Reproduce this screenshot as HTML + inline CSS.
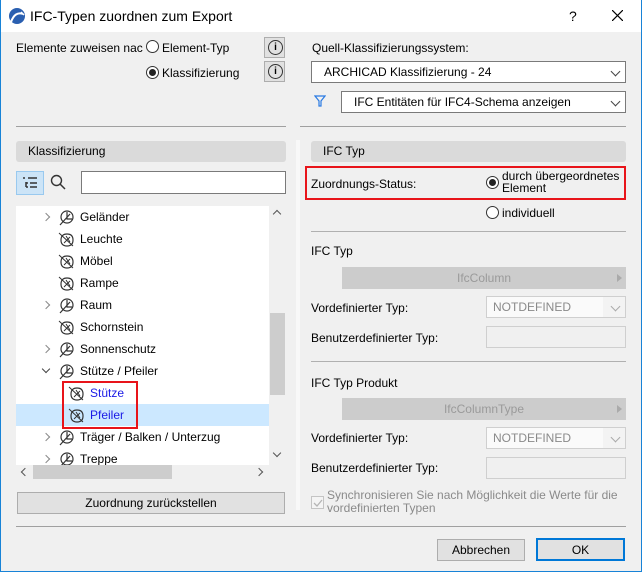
<!DOCTYPE html>
<html><head><meta charset="utf-8"><style>
*{box-sizing:border-box;margin:0;padding:0}
body{width:642px;height:572px;overflow:hidden;background:#f0f0f0;font-family:"Liberation Sans",sans-serif;font-size:12px;color:#000;position:relative}
.a{position:absolute;white-space:nowrap}
.t{line-height:14px}
.sep{position:absolute;height:1px;background:#a0a0a0}
.hdr{position:absolute;background:#dadada;border-radius:3px;height:21px;line-height:21px;padding-left:12px}
.dd{position:absolute;background:#fff;border:1px solid #7a7a7a;height:22px;line-height:20px;padding-left:12px}
.chev{position:absolute;right:6px;top:6px;width:7px;height:7px;border-right:1px solid #444;border-bottom:1px solid #444;transform:rotate(45deg)}
.radio{position:absolute;width:13px;height:13px;border:1px solid #333;border-radius:50%;background:#fff}
.radio.on::after{content:"";position:absolute;left:2px;top:2px;width:7px;height:7px;border-radius:50%;background:#222}
.info{position:absolute;width:21px;height:21px;background:#e1e1e1;border:1px solid #adadad}
.info::after{content:"i";position:absolute;left:3px;top:2px;width:13px;height:13px;border:1.3px solid #333;border-radius:50%;text-align:center;font-size:10px;line-height:13px;font-weight:bold}
.row{position:absolute;left:16px;width:253px;height:22px;line-height:22px}
.row .arr{position:absolute;left:27px;top:8px;width:6px;height:6px;border-right:1.5px solid #888;border-top:1.5px solid #888;transform:rotate(45deg)}
.row .arr.d{transform:rotate(135deg);top:6px;border-color:#444}
.row svg{position:absolute;top:3px}
.lbl{position:absolute;line-height:22px}
.gbtn{position:absolute;background:#cccccc;height:22px;line-height:22px;text-align:center;color:#9a9a9a}
.ddis{position:absolute;background:#f0f0f0;border:1px solid #cfcfcf;height:22px;line-height:20px;padding-left:6px;color:#8a8a8a;background:linear-gradient(90deg,#fafafa 0,#fafafa 84%,#f3f3f3 84%)}
.inp{position:absolute;border:1px solid #cfcfcf;background:#f0f0f0;height:22px}
.btn{position:absolute;background:#e1e1e1;border:1px solid #adadad;height:22px;line-height:20px;text-align:center}
</style></head><body>
<div class="a" style="left:0;top:0;width:642px;height:572px;border:1px solid #1883d7;border-top:none"></div>
<div class="a" style="left:1px;top:0;width:640px;height:32px;background:#fff"></div>
<svg class="a" style="left:8px;top:7px" width="18" height="18" viewBox="0 0 18 18"><circle cx="9" cy="9" r="8" fill="#2a5fb0"/><path d="M3 15 Q7 4 15 7" stroke="#fff" stroke-width="2" fill="none"/><path d="M13 5 L16 8" stroke="#fff" stroke-width="1.5"/></svg>
<div class="a" style="left:30px;top:8px;font-size:14px;line-height:16px">IFC-Typen zuordnen zum Export</div>
<div class="a" style="left:569px;top:8px;font-size:14px">?</div>
<svg class="a" style="left:612px;top:10px" width="11" height="11"><path d="M0 0L11 11M11 0L0 11" stroke="#000" stroke-width="1.2"/></svg>

<div class="a t" style="left:16px;top:41px">Elemente zuweisen nac</div>
<div class="radio" style="left:146px;top:40px"></div>
<div class="a t" style="left:162px;top:41px">Element-Typ</div>
<div class="info" style="left:264px;top:37px"></div>
<div class="radio on" style="left:146px;top:66px"></div>
<div class="a t" style="left:162px;top:66px">Klassifizierung</div>
<div class="info" style="left:264px;top:61px"></div>

<div class="a t" style="left:312px;top:41px">Quell-Klassifizierungssystem:</div>
<div class="dd" style="left:311px;top:61px;width:315px">ARCHICAD Klassifizierung - 24<div class="chev"></div></div>
<svg class="a" style="left:314px;top:95px" width="12" height="12"><path d="M1 1H11L7 6V11H5V6Z" fill="none" stroke="#2a7ae2" stroke-width="1.2"/></svg>
<div class="dd" style="left:341px;top:91px;width:285px">IFC Entitäten für IFC4-Schema anzeigen<div class="chev"></div></div>

<div class="sep" style="left:16px;top:126px;width:270px"></div>
<div class="sep" style="left:300px;top:126px;width:326px"></div>
<div class="a" style="left:296px;top:140px;width:4px;height:370px;background:#f8f8f8"></div>

<div class="hdr" style="left:16px;top:141px;width:270px">Klassifizierung</div>
<div class="a" style="left:16px;top:171px;width:28px;height:24px;background:#cce4f7;border:1px solid #99c9ef"></div>
<svg class="a" style="left:22px;top:176px" width="16" height="14"><path d="M1 2H3M6 2H15M4 6V11M4 7H6M8 7H15M4 11H6M8 11H15" stroke="#333" stroke-width="1.5"/></svg>
<svg class="a" style="left:50px;top:174px" width="16" height="16"><circle cx="6.5" cy="6.5" r="5" fill="none" stroke="#333" stroke-width="1.4"/><path d="M10 10L15 15" stroke="#333" stroke-width="1.5"/></svg>
<div class="a" style="left:81px;top:171px;width:205px;height:23px;background:#fff;border:1px solid #7a7a7a"></div>

<div class="a" style="left:16px;top:206px;width:270px;height:276px;background:#fff"></div>
<div class="a" style="left:269px;top:206px;width:17px;height:259px;background:#f0f0f0"></div>
<div class="a" style="left:270px;top:313px;width:15px;height:82px;background:#cdcdcd"></div>
<div class="a" style="left:274px;top:211px;width:6px;height:6px;border-left:1.5px solid #555;border-top:1.5px solid #555;transform:rotate(45deg)"></div>
<div class="a" style="left:274px;top:450px;width:6px;height:6px;border-right:1.5px solid #555;border-bottom:1.5px solid #555;transform:rotate(45deg)"></div>
<div class="a" style="left:16px;top:465px;width:270px;height:17px;background:#f0f0f0"></div>
<div class="a" style="left:33px;top:465px;width:139px;height:14px;background:#cdcdcd"></div>
<div class="a" style="left:22px;top:469px;width:6px;height:6px;border-left:1.5px solid #555;border-bottom:1.5px solid #555;transform:rotate(45deg)"></div>
<div class="a" style="left:256px;top:469px;width:6px;height:6px;border-right:1.5px solid #555;border-top:1.5px solid #555;transform:rotate(45deg)"></div>

<div class="a" style="left:16px;top:404px;width:253px;height:22px;background:#cce8ff"></div>

<svg width="0" height="0" style="position:absolute"><defs>
<g id="p"><circle cx="9" cy="8" r="6" fill="none" stroke="#333" stroke-width="1.2"/><path d="M2 16L12 5M9 3V10H14" stroke="#333" stroke-width="1.2" fill="none"/></g>
<g id="l"><path d="M3 9Q3 3 9 3Q15 3 15 9Q15 15 9 15Q3 15 3 9Z" fill="none" stroke="#333" stroke-width="1.2"/><path d="M1 2L15 15M6 12L12 6M8 5L12 11" stroke="#333" stroke-width="1" fill="none"/></g>
</defs></svg>

<div class="row" style="top:206px"><div class="arr"></div><svg style="left:42px" width="18" height="17"><use href="#p"/></svg><span class="lbl" style="left:64px">Geländer</span></div>
<div class="row" style="top:228px"><svg style="left:42px" width="18" height="17"><use href="#l"/></svg><span class="lbl" style="left:64px">Leuchte</span></div>
<div class="row" style="top:250px"><svg style="left:42px" width="18" height="17"><use href="#l"/></svg><span class="lbl" style="left:64px">Möbel</span></div>
<div class="row" style="top:272px"><svg style="left:42px" width="18" height="17"><use href="#l"/></svg><span class="lbl" style="left:64px">Rampe</span></div>
<div class="row" style="top:294px"><div class="arr"></div><svg style="left:42px" width="18" height="17"><use href="#p"/></svg><span class="lbl" style="left:64px">Raum</span></div>
<div class="row" style="top:316px"><svg style="left:42px" width="18" height="17"><use href="#l"/></svg><span class="lbl" style="left:64px">Schornstein</span></div>
<div class="row" style="top:338px"><div class="arr"></div><svg style="left:42px" width="18" height="17"><use href="#p"/></svg><span class="lbl" style="left:64px">Sonnenschutz</span></div>
<div class="row" style="top:360px"><div class="arr d"></div><svg style="left:42px" width="18" height="17"><use href="#p"/></svg><span class="lbl" style="left:64px">Stütze / Pfeiler</span></div>
<div class="row" style="top:382px"><svg style="left:52px" width="18" height="17"><use href="#l"/></svg><span class="lbl" style="left:74px;color:#1a1ae6">Stütze</span></div>
<div class="row" style="top:404px"><svg style="left:52px" width="18" height="17"><use href="#l"/></svg><span class="lbl" style="left:74px;color:#1a1ae6">Pfeiler</span></div>
<div class="row" style="top:426px"><div class="arr"></div><svg style="left:42px" width="18" height="17"><use href="#p"/></svg><span class="lbl" style="left:64px">Träger / Balken / Unterzug</span></div>
<div class="row" style="top:448px;height:17px;overflow:hidden"><div class="arr"></div><svg style="left:42px" width="18" height="17"><use href="#p"/></svg><span class="lbl" style="left:64px">Treppe</span></div>
<div class="a" style="left:62px;top:381px;width:76px;height:48px;border:2px solid #e8141a"></div>

<div class="btn" style="left:17px;top:492px;width:268px">Zuordnung zurückstellen</div>

<div class="hdr" style="left:311px;top:141px;width:315px">IFC Typ</div>
<div class="a" style="left:305px;top:166px;width:321px;height:34px;border:2px solid #e8141a"></div>
<div class="a t" style="left:311px;top:177px">Zuordnungs-Status:</div>
<div class="radio on" style="left:486px;top:176px"></div>
<div class="a" style="left:502px;top:170px;line-height:12px">durch übergeordnetes<br>Element</div>
<div class="radio" style="left:486px;top:206px"></div>
<div class="a t" style="left:502px;top:206px">individuell</div>

<div class="sep" style="left:311px;top:231px;width:315px;background:#b0b0b0"></div>
<div class="a t" style="left:311px;top:244px">IFC Typ</div>
<div class="gbtn" style="left:342px;top:267px;width:284px">IfcColumn</div>
<div class="a" style="left:617px;top:274px;border-left:5px solid #aaa;border-top:4px solid transparent;border-bottom:4px solid transparent"></div>
<div class="a t" style="left:311px;top:301px">Vordefinierter Typ:</div>
<div class="ddis" style="left:486px;top:296px;width:140px">NOTDEFINED<div class="chev" style="border-color:#aaa"></div></div>
<div class="a t" style="left:311px;top:331px">Benutzerdefinierter Typ:</div>
<div class="inp" style="left:486px;top:326px;width:140px"></div>

<div class="sep" style="left:311px;top:361px;width:315px;background:#b0b0b0"></div>
<div class="a t" style="left:311px;top:376px">IFC Typ Produkt</div>
<div class="gbtn" style="left:342px;top:398px;width:284px">IfcColumnType</div>
<div class="a" style="left:617px;top:405px;border-left:5px solid #aaa;border-top:4px solid transparent;border-bottom:4px solid transparent"></div>
<div class="a t" style="left:311px;top:431px">Vordefinierter Typ:</div>
<div class="ddis" style="left:486px;top:427px;width:140px">NOTDEFINED<div class="chev" style="border-color:#aaa"></div></div>
<div class="a t" style="left:311px;top:461px">Benutzerdefinierter Typ:</div>
<div class="inp" style="left:486px;top:457px;width:140px"></div>

<div class="a" style="left:311px;top:496px;width:13px;height:13px;border:1px solid #c4c4c4;background:#f4f4f4"></div>
<svg class="a" style="left:312px;top:497px" width="12" height="12"><path d="M2 6L5 9L10 3" stroke="#b5b5b5" stroke-width="1.3" fill="none"/></svg>
<div class="a" style="left:327px;top:489px;line-height:13px;color:#8a8a8a">Synchronisieren Sie nach Möglichkeit die Werte für die<br>vordefinierten Typen</div>

<div class="sep" style="left:16px;top:526px;width:610px"></div>
<div class="btn" style="left:437px;top:539px;width:88px">Abbrechen</div>
<div class="btn" style="left:536px;top:538px;width:89px;height:23px;border:2px solid #0078d7">OK</div>
</body></html>
